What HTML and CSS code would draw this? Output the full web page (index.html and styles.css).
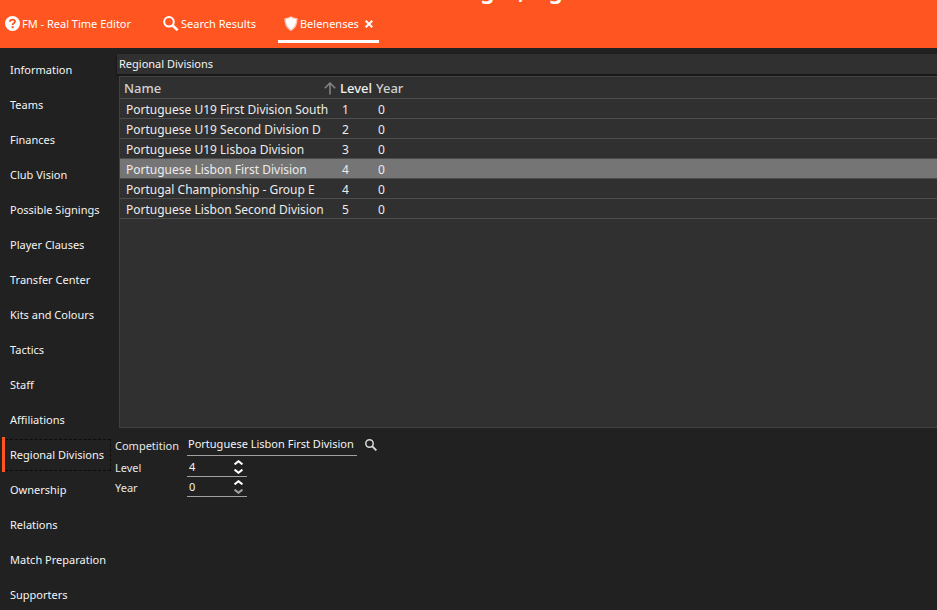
FILE: index.html
```html
<!DOCTYPE html>
<html lang="en">
<head>
  <meta charset="UTF-8">
  <meta name="viewport" content="width=device-width, initial-scale=1.0">
  <title>FM - Real Time Editor</title>
  <link rel="stylesheet" href="styles.css">
</head>

<body>
  <header class="topbar">
    <div class="club-title"><span>g</span><span>,</span><span>g</span></div>
    <nav class="tabs">
      <button type="button" class="tab">
        <svg width="15" height="15" viewBox="0 0 15 15">
          <circle cx="7.5" cy="7.5" r="7.5" fill="#fff" />
          <path d="M5 5.8C5 2.9 10 2.9 10 5.6C10 7.3 7.6 7.2 7.6 9.1" fill="none" stroke="#ff5520" stroke-width="1.9" />
          <rect x="6.6" y="10.2" width="2" height="2" fill="#ff5520" />
        </svg>
        <span>FM - Real Time Editor</span>
      </button>
      <button type="button" class="tab">
        <svg width="16" height="15" viewBox="0 0 16 15">
          <circle cx="6" cy="5.8" r="4.8" fill="none" stroke="#fff" stroke-width="2" />
          <path d="M9.4 9.2L14.6 14.2" stroke="#fff" stroke-width="2.6" />
        </svg>
        <span>Search Results</span>
      </button>
      <div class="tab tab-active">
        <button type="button">
          <svg width="14" height="15" viewBox="0 0 14 15">
            <path d="M7 0C9 1.4 11 2 13.5 2C13.8 8 11.8 12.6 7 15C2.2 12.6 0.2 8 0.5 2C3 2 5 1.4 7 0Z" fill="#ffc4b0" />
            <path d="M7 1.6C8.6 2.6 10.4 3.1 12.2 3.2C12.2 7.8 10.4 11.5 7 13.5C3.6 11.5 1.8 7.8 1.8 3.2C3.6 3.1 5.4 2.6 7 1.6Z" fill="#fff" />
          </svg>
          <span>Belenenses</span>
        </button>
        <button type="button" aria-label="Close tab">
          <svg width="8" height="8" viewBox="0 0 8 8">
            <path d="M0.7 0.7L7.3 7.3M7.3 0.7L0.7 7.3" stroke="#fff" stroke-width="2" />
          </svg>
        </button>
      </div>
    </nav>
  </header>

  <div class="layout">
    <nav class="sidebar">
      <a href="#">Information</a>
      <a href="#">Teams</a>
      <a href="#">Finances</a>
      <a href="#">Club Vision</a>
      <a href="#">Possible Signings</a>
      <a href="#">Player Clauses</a>
      <a href="#">Transfer Center</a>
      <a href="#">Kits and Colours</a>
      <a href="#">Tactics</a>
      <a href="#">Staff</a>
      <a href="#">Affiliations</a>
      <a href="#" class="current"><span>Regional Divisions</span></a>
      <a href="#">Ownership</a>
      <a href="#">Relations</a>
      <a href="#">Match Preparation</a>
      <a href="#">Supporters</a>
    </nav>

    <main class="content">
      <h1>Regional Divisions</h1>

      <div class="panel">
        <table>
          <thead>
            <tr>
              <th class="col-name">
                <div class="sorted">
                  <span>Name</span>
                  <svg width="12" height="13" viewBox="0 0 12 13">
                    <path d="M6 12.5V1.2M0.8 6.2L6 1L11.2 6.2" fill="none" stroke="#858585" stroke-width="1.5" />
                  </svg>
                </div>
              </th>
              <th class="col-level">Level</th>
              <th>Year</th>
            </tr>
          </thead>
          <tbody>
            <tr><td>Portuguese U19 First Division South</td><td>1</td><td>0</td></tr>
            <tr><td>Portuguese U19 Second Division D</td><td>2</td><td>0</td></tr>
            <tr><td>Portuguese U19 Lisboa Division</td><td>3</td><td>0</td></tr>
            <tr class="selected"><td>Portuguese Lisbon First Division</td><td>4</td><td>0</td></tr>
            <tr><td>Portugal Championship - Group E</td><td>4</td><td>0</td></tr>
            <tr><td>Portuguese Lisbon Second Division</td><td>5</td><td>0</td></tr>
          </tbody>
        </table>
      </div>

      <form class="details">
        <label for="competition">Competition</label>
        <div class="lookup">
          <input type="text" id="competition" value="Portuguese Lisbon First Division">
          <button type="button" aria-label="Find competition">
            <svg width="12" height="12" viewBox="0 0 12 12">
              <circle cx="4.5" cy="4.5" r="3.7" fill="none" stroke="#dcdcdc" stroke-width="1.5" />
              <path d="M7.3 7.3L11.4 11.4" stroke="#dcdcdc" stroke-width="1.9" />
            </svg>
          </button>
        </div>

        <label for="level">Level</label>
        <div class="spinner">
          <input type="number" id="level" value="4">
          <div class="arrows">
            <button type="button" aria-label="Increase level">
              <svg width="9" height="5" viewBox="0 0 9 5"><path d="M0.6 4.4L4.5 1.2L8.4 4.4" fill="none" stroke="#fff" stroke-width="2" /></svg>
            </button>
            <button type="button" aria-label="Decrease level">
              <svg width="9" height="5" viewBox="0 0 9 5"><path d="M0.6 0.6L4.5 3.8L8.4 0.6" fill="none" stroke="#fff" stroke-width="2" /></svg>
            </button>
          </div>
        </div>

        <label for="year">Year</label>
        <div class="spinner">
          <input type="number" id="year" value="0">
          <div class="arrows">
            <button type="button" aria-label="Increase year">
              <svg width="9" height="5" viewBox="0 0 9 5"><path d="M0.6 4.4L4.5 1.2L8.4 4.4" fill="none" stroke="#fff" stroke-width="2" /></svg>
            </button>
            <button type="button" aria-label="Decrease year">
              <svg width="9" height="5" viewBox="0 0 9 5"><path d="M0.6 0.6L4.5 3.8L8.4 0.6" fill="none" stroke="#a0a0a0" stroke-width="2" /></svg>
            </button>
          </div>
        </div>
      </form>
    </main>
  </div>
</body>
</html>
```
FILE: styles.css
```css
* {
  margin: 0;
  padding: 0;
  box-sizing: border-box;
}

body {
  background: #212121;
  color: #f4f4f4;
  font-family: 'Noto Sans', 'Open Sans', sans-serif;
  font-size: 11px;
  line-height: 16px;
  height: 100vh;
  overflow: hidden;
}

button,
input {
  background: none;
  border: none;
  outline: none;
  color: inherit;
  font: inherit;
}

button {
  cursor: pointer;
}

svg {
  display: block;
  flex: none;
}

/* top bar */
.topbar {
  position: relative;
  height: 48px;
  background: #ff5520;
  overflow: hidden;
}

.club-title {
  position: absolute;
  left: 0;
  right: 0;
  top: -25px;
  display: flex;
  justify-content: center;
  gap: 24px;
  padding-left: 106px;
  color: #fff;
  font-size: 22px;
  font-weight: 700;
  line-height: 30px;
}

.tabs {
  display: flex;
  height: 43px;
  padding-left: 5px;
  gap: 32px;
  color: #fff;
}

.tab,
.tab button {
  display: flex;
  align-items: center;
  gap: 2px;
}

.tab {
  padding-top: 4px;
}

.tab-active {
  margin-left: -10px;
  padding: 7px 6px 0;
  gap: 6px;
  border-bottom: 3px solid #fff;
}

/* sidebar */
.layout {
  display: flex;
}

.sidebar {
  flex: none;
  width: 115px;
  padding: 4px 0 0 2px;
}

.sidebar a {
  display: flex;
  align-items: center;
  height: 35px;
  padding-left: 8px;
  color: inherit;
  text-decoration: none;
  white-space: nowrap;
}

.sidebar .current {
  padding: 0 4px 0 0;
  border-left: 3px solid #ff5520;
}

.current span {
  flex: 1;
  padding: 7px 0 7px 5px;
  border: 1px dashed #0c0c0c;
  border-left: none;
}

/* content */
.content {
  flex: 1;
  min-width: 0;
  padding-top: 6px;
}

h1 {
  margin-left: 2px;
  padding: 2px;
  background: #303030;
  box-shadow: 0 1px 2px #111;
  font-size: 11px;
  font-weight: 400;
}

.panel {
  min-height: 352px;
  margin: 2px 0 0 4px;
  background: #303030;
  border: 1px solid #414141;
  border-right: none;
}

table {
  width: 100%;
  table-layout: fixed;
  border-collapse: collapse;
  font-size: 12px;
  line-height: 17px;
}

th {
  height: 21px;
  padding: 2px 0 0 4px;
  border-bottom: 1px solid #4c4c4c;
  color: #d0d0d0;
  font-size: 13px;
  font-weight: 500;
  text-align: left;
}

td {
  height: 20px;
  padding: 2px 0 0 6px;
  border-bottom: 1px solid #4c4c4c;
  color: #ececec;
  white-space: nowrap;
}

.col-name {
  width: 216px;
}

.col-level {
  width: 36px;
  color: #f0f0f0;
}

.sorted {
  display: flex;
  align-items: center;
  justify-content: space-between;
}

.selected {
  background: #757575;
}

/* details form */
.details {
  display: grid;
  grid-template-columns: 72px 1fr;
  align-items: center;
  padding-top: 5px;
}

.details label {
  padding-top: 1px;
  color: #e6e6e6;
}

.lookup {
  display: flex;
  align-items: center;
  gap: 8px;
  margin-bottom: 1px;
}

.lookup input {
  width: 170px;
  height: 23px;
  padding: 0 0 1px 1px;
  border-bottom: 1px solid #a0a0a0;
}

.spinner {
  display: flex;
  align-items: center;
  width: 60px;
  border-bottom: 1px solid #a0a0a0;
}

.spinner input {
  flex: 1;
  min-width: 0;
  height: 19px;
  padding-left: 2px;
  appearance: textfield;
}

.arrows {
  display: flex;
  flex-direction: column;
  gap: 4px;
  padding-right: 4px;
}

.arrows button {
  display: block;
}
```
